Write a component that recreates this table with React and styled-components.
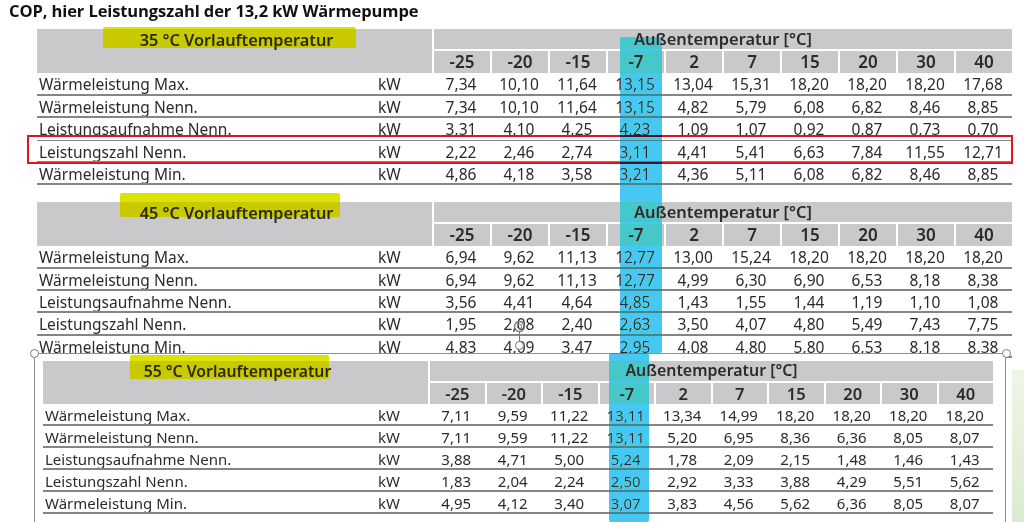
import React from 'react';
import styled, { createGlobalStyle } from 'styled-components';

const GlobalStyle = createGlobalStyle`
  html, body {
    margin: 0;
    background: #ffffff;
  }
  body {
    font-family: 'Noto Sans', 'Liberation Sans', sans-serif;
    color: #2b2b2b;
  }
`;

const ROWS = [
  'Wärmeleistung Max.',
  'Wärmeleistung Nenn.',
  'Leistungsaufnahme Nenn.',
  'Leistungszahl Nenn.',
  'Wärmeleistung Min.',
];

const TEMPS = ['-25', '-20', '-15', '-7', '2', '7', '15', '20', '30', '40'];

const TABLES = [
  {
    title: '35 °C Vorlauftemperatur',
    values: [
      ['7,34', '10,10', '11,64', '13,15', '13,04', '15,31', '18,20', '18,20', '18,20', '17,68'],
      ['7,34', '10,10', '11,64', '13,15', '4,82', '5,79', '6,08', '6,82', '8,46', '8,85'],
      ['3,31', '4,10', '4,25', '4,23', '1,09', '1,07', '0,92', '0,87', '0,73', '0,70'],
      ['2,22', '2,46', '2,74', '3,11', '4,41', '5,41', '6,63', '7,84', '11,55', '12,71'],
      ['4,86', '4,18', '3,58', '3,21', '4,36', '5,11', '6,08', '6,82', '8,46', '8,85'],
    ],
  },
  {
    title: '45 °C Vorlauftemperatur',
    values: [
      ['6,94', '9,62', '11,13', '12,77', '13,00', '15,24', '18,20', '18,20', '18,20', '18,20'],
      ['6,94', '9,62', '11,13', '12,77', '4,99', '6,30', '6,90', '6,53', '8,18', '8,38'],
      ['3,56', '4,41', '4,64', '4,85', '1,43', '1,55', '1,44', '1,19', '1,10', '1,08'],
      ['1,95', '2,08', '2,40', '2,63', '3,50', '4,07', '4,80', '5,49', '7,43', '7,75'],
      ['4,83', '4,09', '3,47', '2,95', '4,08', '4,80', '5,80', '6,53', '8,18', '8,38'],
    ],
  },
  {
    title: '55 °C Vorlauftemperatur',
    values: [
      ['7,11', '9,59', '11,22', '13,11', '13,34', '14,99', '18,20', '18,20', '18,20', '18,20'],
      ['7,11', '9,59', '11,22', '13,11', '5,20', '6,95', '8,36', '6,36', '8,05', '8,07'],
      ['3,88', '4,71', '5,00', '5,24', '1,78', '2,09', '2,15', '1,48', '1,46', '1,43'],
      ['1,83', '2,04', '2,24', '2,50', '2,92', '3,33', '3,88', '4,29', '5,51', '5,62'],
      ['4,95', '4,12', '3,40', '3,07', '3,83', '4,56', '5,62', '6,36', '8,05', '8,07'],
    ],
  },
];

const Page = styled.div`
  position: relative;
  width: 1024px;
  height: 522px;
  overflow: hidden;
`;

const Title = styled.h1`
  margin: 0;
  height: 29px;
  padding: 0 0 0 9px;
  box-sizing: border-box;
  font-family: 'Open Sans', 'Liberation Sans', sans-serif;
  font-weight: 700;
  font-size: 16.5px;
  line-height: 22px;
  color: #111;
  letter-spacing: -0.1px;
`;

const Sheet = styled.div`
  padding-left: 37px;
  margin-top: ${(p) => p.$gap || 0}px;
`;

const Grid = styled.div`
  display: grid;
  width: ${(p) => p.$width}px;
  grid-template-columns: ${(p) => p.$label}px ${(p) => p.$unit}px repeat(10, 1fr);
  grid-template-rows: ${(p) => p.$head}px ${(p) => p.$head}px;
  grid-auto-rows: ${(p) => p.$row}px;
  font-size: ${(p) => p.$font}px;
`;

const LeftHead = styled.div`
  grid-column: 1 / 3;
  grid-row: 1 / 3;
  background: #c9c9cb;
  text-align: center;
  font-weight: 600;
  font-size: 1.05em;
  line-height: ${(p) => p.$line}px;
  padding-left: 4px;
`;

const TempHead = styled.div`
  grid-column: 3 / 13;
  grid-row: 1;
  background: #c9c9cb;
  border-left: 2px solid #fff;
  border-bottom: 2px solid #fff;
  box-sizing: border-box;
  text-align: center;
  font-weight: 600;
  font-size: 1.06em;
  line-height: ${(p) => p.$line}px;
`;

const TempCell = styled.div`
  grid-row: 2;
  background: #c9c9cb;
  border-left: 2px solid #fff;
  box-sizing: border-box;
  text-align: center;
  font-weight: 600;
  font-size: 1.1em;
  line-height: ${(p) => p.$line}px;
`;

const Cell = styled.div`
  border-bottom: 2px solid #858585;
  box-sizing: border-box;
  white-space: nowrap;
  overflow: hidden;
  padding-top: 2px;
  line-height: ${(p) => p.$line}px;
  text-align: ${(p) => (p.$text ? 'left' : 'center')};
  padding-left: ${(p) => (p.$text ? 2 : 0)}px;
`;

const Frame = styled.div`
  position: relative;
  margin: -5px 0 0 34px;
  width: 972px;
  height: 180px;
  box-sizing: border-box;
  background: #fff;
  border: 1px solid #8f8f8f;
  border-bottom: none;
  padding: 7px 0 0 8px;
`;

const Marker = styled.div`
  position: absolute;
  mix-blend-mode: darken;
  pointer-events: none;
  border-radius: 2px;
  background: ${(p) => (p.$tone === 'blue' ? '#46c8f2' : '#dde300')};
`;

const RedBox = styled.div`
  position: absolute;
  left: 27px;
  top: 135px;
  width: 986px;
  height: 29px;
  box-sizing: border-box;
  border: 2px solid #e3141b;
  box-shadow: inset 0 3px 0 #fff;
`;

const Handle = styled.span`
  position: absolute;
  width: 7px;
  height: 7px;
  margin: -4px 0 0 -4px;
  border-radius: 50%;
  background: #fff;
  border: 1px solid #7a7a7a;
`;

const Stem = styled.span`
  position: absolute;
  left: 519px;
  top: 332px;
  width: 1px;
  height: 11px;
  background: #7a7a7a;
`;

const Rotate = styled.svg`
  position: absolute;
  left: 512px;
  top: 319px;
`;

const GreenEdge = styled.div`
  position: absolute;
  left: 1012px;
  top: 370px;
  width: 12px;
  height: 152px;
  background: linear-gradient(180deg, #eef5e5 0%, #dcead0 100%);
`;

function CopTable({ table, size }) {
  return (
    <Grid
      $width={size.width}
      $label={size.label}
      $unit={size.unit}
      $head={size.head}
      $row={size.row}
      $font={size.font}
    >
      <LeftHead $line={size.head}>{table.title}</LeftHead>
      <TempHead $line={size.head - 2}>Außentemperatur [°C]</TempHead>
      {TEMPS.map((t) => (
        <TempCell key={t} $line={size.head}>
          {t}
        </TempCell>
      ))}
      {ROWS.map((label, r) => (
        <React.Fragment key={label}>
          <Cell $text $line={size.row - 4}>{label}</Cell>
          <Cell $text $line={size.row - 4}>kW</Cell>
          {table.values[r].map((v, i) => (
            <Cell key={i} $line={size.row - 4}>
              {v}
            </Cell>
          ))}
        </React.Fragment>
      ))}
    </Grid>
  );
}

const BIG = { width: 975, label: 339, unit: 56, head: 22.2, row: 22.4, font: 15.5 };
const SMALL = { width: 950, label: 333, unit: 52, head: 21.5, row: 22, font: 15 };

export default function App() {
  return (
    <>
      <GlobalStyle />
      <Page>
        <Title>COP, hier Leistungszahl der 13,2 kW Wärmepumpe</Title>
        <Sheet>
          <CopTable table={TABLES[0]} size={BIG} />
        </Sheet>
        <Sheet $gap={16.6}>
          <CopTable table={TABLES[1]} size={BIG} />
        </Sheet>
        <Frame>
          <CopTable table={TABLES[2]} size={SMALL} />
        </Frame>

        <GreenEdge />
        <RedBox />

        <Marker style={{ left: 103, top: 27, width: 253, height: 21 }} />
        <Marker style={{ left: 120, top: 193, width: 220, height: 24 }} />
        <Marker style={{ left: 130, top: 355, width: 199, height: 24 }} />
        <Marker $tone="blue" style={{ left: 620, top: 37, width: 42, height: 316 }} />
        <Marker $tone="blue" style={{ left: 609, top: 353, width: 40, height: 169 }} />

        <Handle style={{ left: 34, top: 353 }} />
        <Handle style={{ left: 1006, top: 353 }} />
        <Stem />
        <Handle style={{ left: 519, top: 345 }} />
        <Rotate width="15" height="15" viewBox="0 0 15 15">
          <path
            d="M12.5 7.5a5 5 0 1 1-1.6-3.7"
            fill="none"
            stroke="#7a7a7a"
            strokeWidth="1.4"
          />
          <path d="M9.2 1.8l3.2 1.2-1.6 3z" fill="#7a7a7a" />
          <circle cx="7.5" cy="7.5" r="2.2" fill="none" stroke="#7a7a7a" strokeWidth="1" />
        </Rotate>
      </Page>
    </>
  );
}
